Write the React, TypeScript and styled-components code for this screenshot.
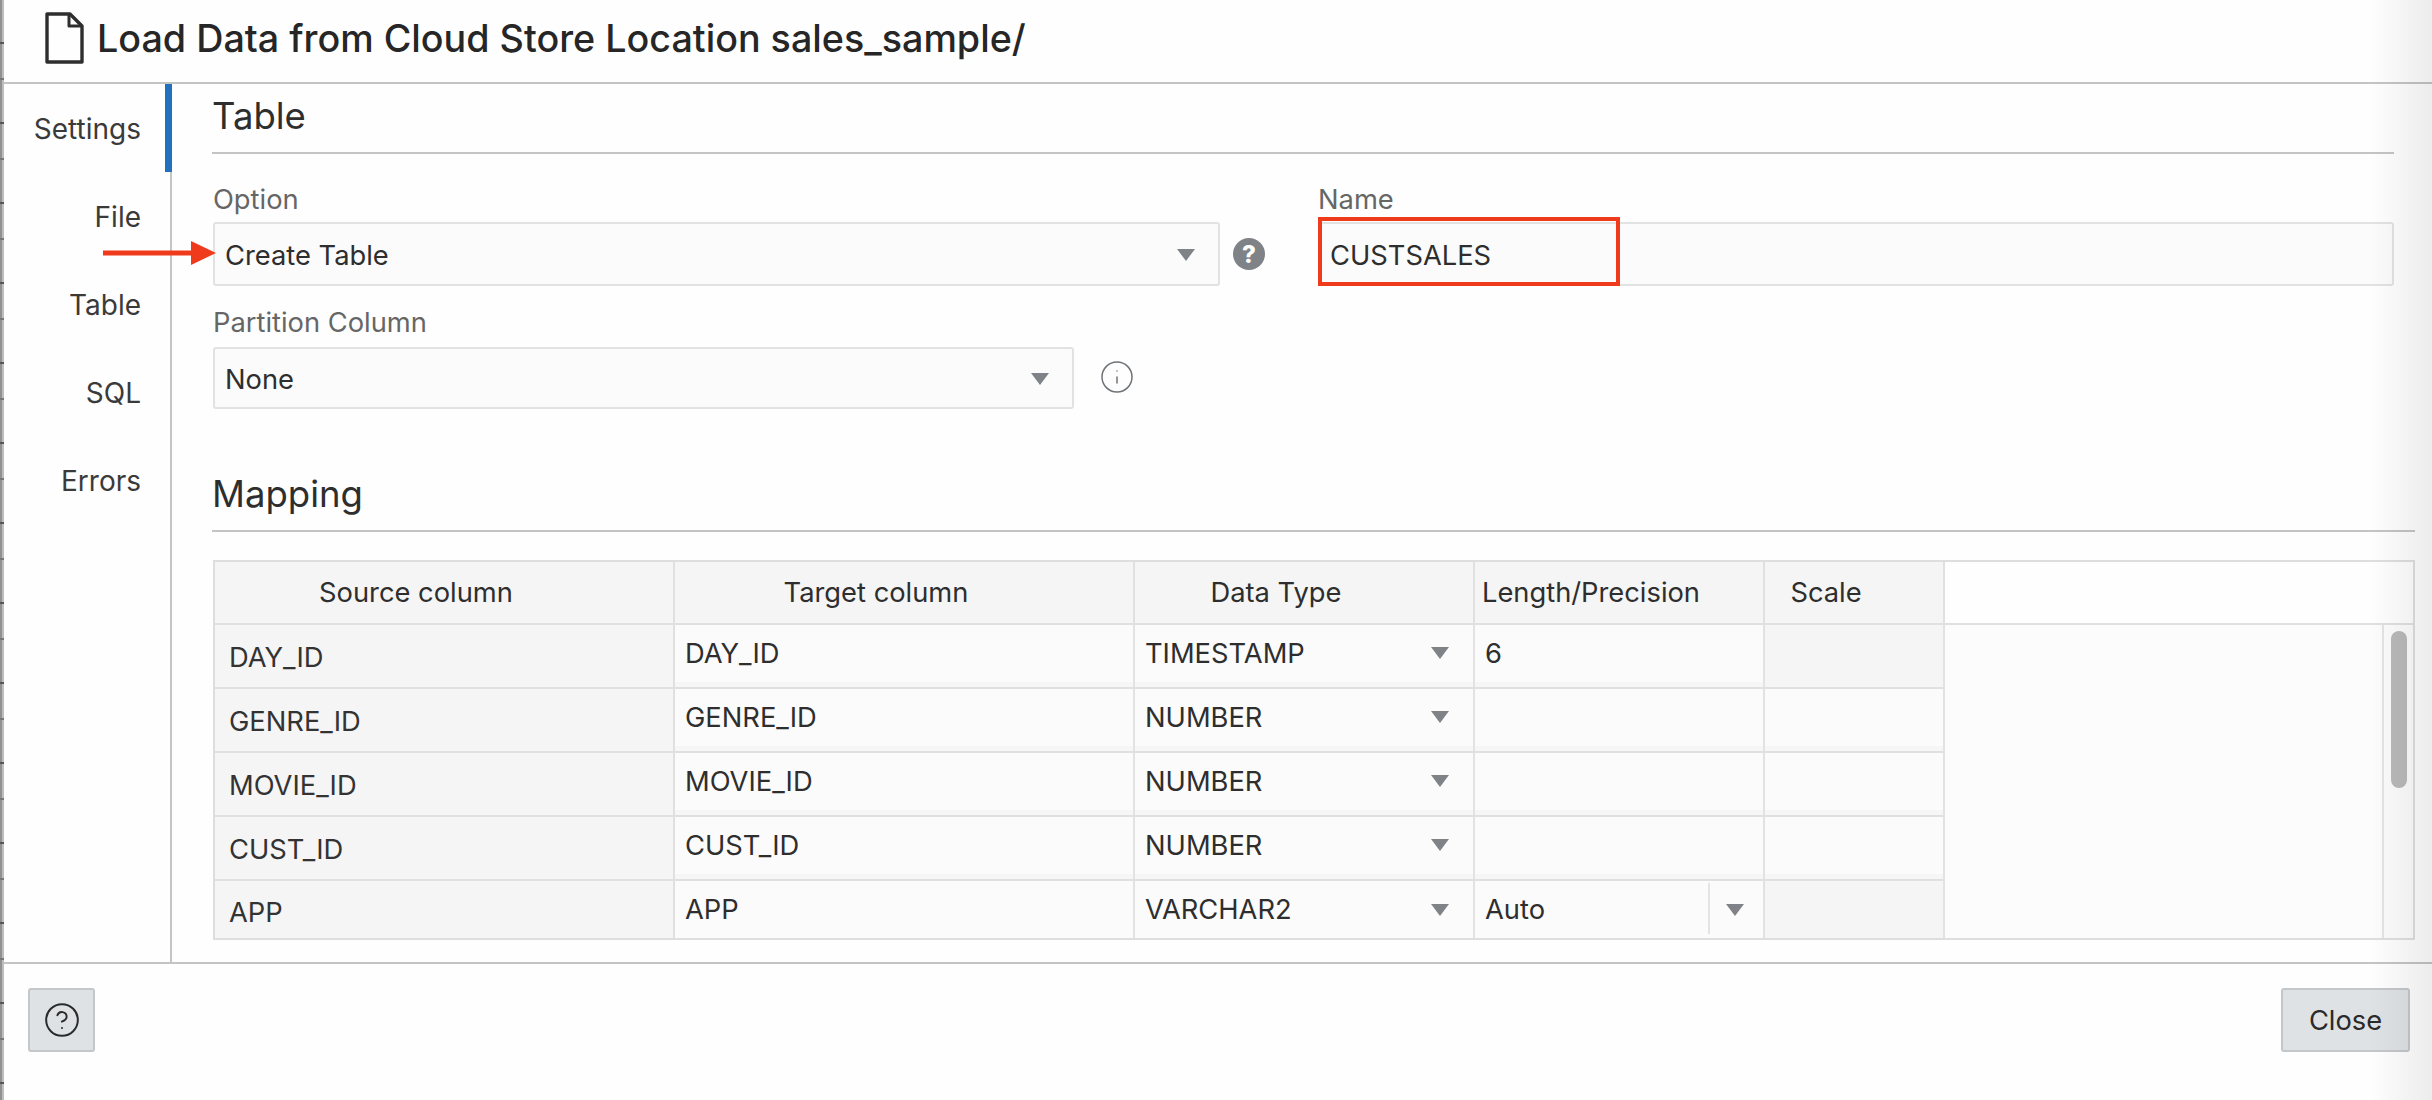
import React from 'react';
import styled, { createGlobalStyle } from 'styled-components';
import { CircleHelp, Info } from 'lucide-react';

const GlobalStyle = createGlobalStyle`
  html, body {
    margin: 0;
    padding: 0;
    background: #fff;
  }
  body {
    font-family: Inter, "Liberation Sans", sans-serif;
    color: #2e2e2e;
  }
`;

const Page = styled.div`
  position: relative;
  display: flex;
  width: 2432px;
  height: 1100px;
  overflow: hidden;
`;

const EdgeStrip = styled.div`
  flex: 0 0 4px;
  background:
    repeating-linear-gradient(180deg, transparent 0 42px, #555 42px 44px, transparent 44px 78px, #777 78px 80px),
    linear-gradient(90deg, #8f9193 0 2px, #bdbdbd 2px);
`;

const Dialog = styled.div`
  flex: 1;
  min-width: 0;
  display: flex;
  flex-direction: column;
  background: #fefefe;
`;

const RightFade = styled.div`
  position: absolute;
  top: 0;
  right: 0;
  bottom: 0;
  width: 62px;
  background: linear-gradient(90deg, rgba(0, 0, 0, 0), rgba(0, 0, 0, 0.07));
  pointer-events: none;
`;

const Header = styled.div`
  flex: 0 0 84px;
  box-sizing: border-box;
  display: flex;
  align-items: center;
  gap: 13px;
  padding: 0 0 6px 40px;
  border-bottom: 2px solid #c4c4c4;
`;

const Title = styled.h1`
  margin: 0;
  font-size: 37.7px;
  font-weight: 500;
  line-height: 44px;
  color: #262626;
`;

const Body = styled.div`
  flex: 0 0 878px;
  display: flex;
  min-height: 0;
`;

const Sidebar = styled.nav`
  flex: 0 0 168px;
  box-sizing: border-box;
  border-right: 2px solid #c4c4c4;
`;

const NavItem = styled.div<{ $active?: boolean }>`
  height: 88px;
  box-sizing: border-box;
  display: flex;
  align-items: center;
  justify-content: flex-end;
  padding: 2px 24px 0 0;
  margin-right: -2px;
  font-size: 28px;
  color: #3a3a3a;
  border-right: 7px solid ${props => (props.$active ? '#2271bd' : 'transparent')};
`;

const Content = styled.main`
  flex: 1;
  min-width: 0;
  padding: 0 38px 0 41px;
`;

const SectionHeading = styled.h2<{ $wide?: boolean }>`
  margin: ${props => (props.$wide ? '53px -21px 0 -1px' : '0 0 0 -1px')};
  height: 70px;
  box-sizing: border-box;
  border-bottom: 2px solid #c4c4c4;
  font-size: 36.5px;
  font-weight: 400;
  line-height: 64px;
  color: #2e2e2e;
`;

const FieldRow = styled.div<{ $first?: boolean }>`
  display: flex;
  align-items: flex-end;
  margin-top: ${props => (props.$first ? '30px' : '21px')};
`;

const Field = styled.div<{ $width?: number }>`
  flex: ${props => (props.$width ? `0 0 ${props.$width}px` : '1')};
  min-width: 0;
`;

const Label = styled.div<{ $gap: number }>`
  font-size: 27.3px;
  line-height: 32px;
  margin-bottom: ${props => props.$gap}px;
  color: #666;
`;

const InputBox = styled.div<{ $height: number }>`
  position: relative;
  box-sizing: border-box;
  height: ${props => props.$height}px;
  display: flex;
  align-items: center;
  justify-content: space-between;
  padding: 2px 23px 0 10px;
  border: 2px solid #e2e2e2;
  border-radius: 3px;
  background: #fbfbfb;
  font-size: 27.3px;
  color: #2e2e2e;
`;

const Caret = styled.span`
  flex: none;
  width: 0;
  height: 0;
  border-left: 9px solid transparent;
  border-right: 9px solid transparent;
  border-top: 12px solid #7f8387;
`;

const HelpSlot = styled.div<{ $width: number }>`
  flex: 0 0 ${props => props.$width}px;
  height: 64px;
  display: flex;
  align-items: center;
`;

const HelpBadge = styled.span`
  width: 32px;
  height: 32px;
  margin-left: 13px;
  border-radius: 50%;
  display: flex;
  align-items: center;
  justify-content: center;
  background: #7f8387;
  color: #fff;
  font-size: 24px;
  font-weight: 800;
`;

const InfoIcon = styled(Info)`
  margin: -2px 0 0 25px;
  color: #6f7377;
`;

const PartitionSlot = styled(HelpSlot)`
  height: 62px;
`;

const MarkerArrow = styled.svg`
  position: absolute;
  left: -112px;
  top: 15px;
`;

const MarkerBox = styled.div`
  position: absolute;
  left: -2px;
  top: -7px;
  width: 302px;
  height: 69px;
  box-sizing: border-box;
  border: 4px solid #f03a1c;
`;

const Grid = styled.div`
  margin: 28px -21px 0 0;
  box-sizing: border-box;
  height: 380px;
  border: 2px solid #dedede;
  overflow: hidden;
  font-size: 27.3px;
`;

const HeadRow = styled.div`
  display: flex;
  height: 63px;
  box-sizing: border-box;
  border-bottom: 2px solid #e0e0e0;
`;

const HeadCell = styled.div<{ $width: number }>`
  flex: 0 0 ${props => props.$width}px;
  box-sizing: border-box;
  display: flex;
  align-items: center;
  justify-content: center;
  padding: 0 56px 0 0;
  border-right: 2px solid #e0e0e0;
  background: #f5f5f5;
  color: #2e2e2e;
  white-space: nowrap;
`;

const BodyArea = styled.div`
  display: flex;
  height: 313px;
`;

const Rows = styled.div`
  flex: 0 0 1730px;
`;

const Row = styled.div<{ $last?: boolean }>`
  display: flex;
  height: ${props => (props.$last ? '57px' : '64px')};
  box-sizing: border-box;
  border-bottom: ${props => (props.$last ? 'none' : '2px solid #e0e0e0')};
`;

const SourceCell = styled.div<{ $last?: boolean }>`
  flex: 0 0 460px;
  box-sizing: border-box;
  display: flex;
  align-items: center;
  padding: ${props => (props.$last ? '6px' : '2px')} 0 0 14px;
  border-right: 2px solid #e0e0e0;
  background: #f5f5f5;
  color: #333;
`;

const EditCell = styled.div<{ $width: number; $last?: boolean; $disabled?: boolean }>`
  flex: 0 0 ${props => props.$width}px;
  box-sizing: border-box;
  display: flex;
  align-items: center;
  justify-content: space-between;
  padding: 0 24px ${props => (props.$last ? '0' : '6px')} 10px;
  border-right: 2px solid #e2e2e2;
  background: ${props => (props.$disabled ? '#f5f5f5' : '#fbfbfb')};
  box-shadow: ${props => (props.$last || props.$disabled ? 'none' : 'inset 0 -5px 0 #f6f6f6')};
  color: #2e2e2e;
`;

const ComboCell = styled(EditCell)`
  position: relative;
  padding-right: 19px;
`;

const ComboDivider = styled.span`
  position: absolute;
  right: 53px;
  top: 2px;
  bottom: 4px;
  width: 2px;
  background: #e4e4e4;
`;

const BlankPane = styled.div`
  flex: 1;
  display: flex;
  justify-content: flex-end;
  background: #fcfcfc;
`;

const ScrollGutter = styled.div`
  flex: 0 0 29px;
  box-sizing: border-box;
  padding: 6px 6px 0 7px;
  border-left: 2px solid #e4e4e4;
`;

const ScrollThumb = styled.div`
  width: 16px;
  height: 157px;
  border-radius: 8px;
  background: #b9b9b9;
`;

const Footer = styled.div`
  flex: 1;
  box-sizing: border-box;
  display: flex;
  align-items: flex-start;
  justify-content: space-between;
  padding: 24px 22px 0 24px;
  border-top: 2px solid #c4c4c4;
`;

const FooterButton = styled.button<{ $width: number }>`
  width: ${props => props.$width}px;
  height: 64px;
  box-sizing: border-box;
  display: flex;
  align-items: center;
  justify-content: center;
  padding: 0;
  border: 2px solid #c4c7ca;
  border-radius: 3px;
  background: #dfe2e5;
  font-family: inherit;
  font-size: 27.3px;
  color: #2a2a2a;
`;

const columns = [
  { title: 'Source column', width: 460 },
  { title: 'Target column', width: 460 },
  { title: 'Data Type', width: 340 },
  { title: 'Length/Precision', width: 290 },
  { title: 'Scale', width: 180 },
];

const mappingRows = [
  { name: 'DAY_ID', type: 'TIMESTAMP', length: '6', noScale: true },
  { name: 'GENRE_ID', type: 'NUMBER', length: '' },
  { name: 'MOVIE_ID', type: 'NUMBER', length: '' },
  { name: 'CUST_ID', type: 'NUMBER', length: '' },
  { name: 'APP', type: 'VARCHAR2', length: 'Auto', combo: true, noScale: true },
];

const navItems = ['Settings', 'File', 'Table', 'SQL', 'Errors'];

const FileIcon = () => (
  <svg width="40" height="52" viewBox="0 0 40 52" fill="none" stroke="#2e2e2e" strokeWidth="3.4" strokeLinejoin="round">
    <path d="M3 2h23l12 12v36H3z" />
    <path d="M25 2v12h13" strokeWidth="3" />
  </svg>
);

const App: React.FC = () => {
  return (
    <Page>
      <GlobalStyle />
      <EdgeStrip />
      <Dialog>
        <Header>
          <FileIcon />
          <Title>Load Data from Cloud Store Location sales_sample/</Title>
        </Header>

        <Body>
          <Sidebar>
            {navItems.map((item, index) => (
              <NavItem key={item} $active={index === 0}>
                {item}
              </NavItem>
            ))}
          </Sidebar>

          <Content>
            <SectionHeading>Table</SectionHeading>

            <FieldRow $first>
              <Field $width={1007}>
                <Label $gap={6}>Option</Label>
                <InputBox $height={64}>
                  <MarkerArrow width="114" height="28" viewBox="0 0 114 28">
                    <path d="M0 11.5h88V2l25 12-25 12v-9.5H0z" fill="#f03a1c" />
                  </MarkerArrow>
                  Create Table
                  <Caret />
                </InputBox>
              </Field>
              <HelpSlot $width={98}>
                <HelpBadge>?</HelpBadge>
              </HelpSlot>
              <Field>
                <Label $gap={6}>Name</Label>
                <InputBox $height={64}>
                  <MarkerBox />
                  CUSTSALES
                </InputBox>
              </Field>
            </FieldRow>

            <FieldRow>
              <Field $width={861}>
                <Label $gap={8}>Partition Column</Label>
                <InputBox $height={62}>
                  None
                  <Caret />
                </InputBox>
              </Field>
              <PartitionSlot $width={80}>
                <InfoIcon size={36} strokeWidth={1} />
              </PartitionSlot>
            </FieldRow>

            <SectionHeading $wide>Mapping</SectionHeading>

            <Grid>
              <HeadRow>
                {columns.map(column => (
                  <HeadCell key={column.title} $width={column.width}>
                    {column.title}
                  </HeadCell>
                ))}
              </HeadRow>
              <BodyArea>
                <Rows>
                  {mappingRows.map((row, index) => {
                    const last = index === mappingRows.length - 1;
                    return (
                      <Row key={row.name} $last={last}>
                        <SourceCell $last={last}>{row.name}</SourceCell>
                        <EditCell $width={460} $last={last}>{row.name}</EditCell>
                        <EditCell $width={340} $last={last}>
                          {row.type}
                          <Caret />
                        </EditCell>
                        {row.combo ? (
                          <ComboCell $width={290} $last={last}>
                            {row.length}
                            <ComboDivider />
                            <Caret />
                          </ComboCell>
                        ) : (
                          <EditCell $width={290} $last={last}>{row.length}</EditCell>
                        )}
                        <EditCell $width={180} $last={last} $disabled={row.noScale} />
                      </Row>
                    );
                  })}
                </Rows>
                <BlankPane>
                  <ScrollGutter>
                    <ScrollThumb />
                  </ScrollGutter>
                </BlankPane>
              </BodyArea>
            </Grid>
          </Content>
        </Body>

        <Footer>
          <FooterButton $width={67} aria-label="Help">
            <CircleHelp size={38} strokeWidth={1.25} />
          </FooterButton>
          <FooterButton $width={129}>Close</FooterButton>
        </Footer>
      </Dialog>
      <RightFade />
    </Page>
  );
};

export default App;
